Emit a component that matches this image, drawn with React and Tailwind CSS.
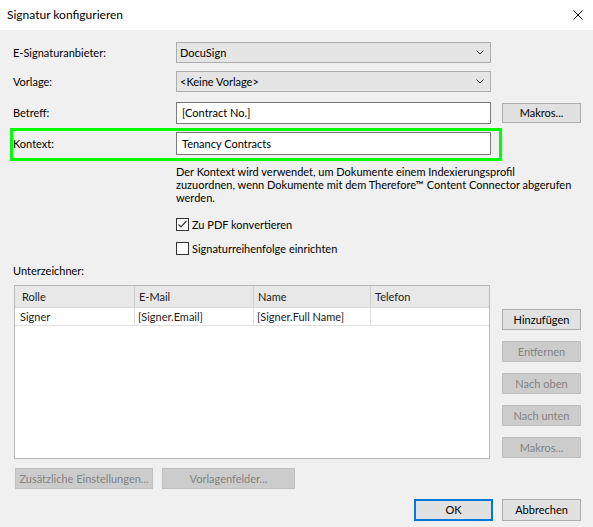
import React from "react";

const Button = ({ children, disabled, primary, className = "" }) => {
  let look = "bg-[#e1e1e1] border border-[#adadad] text-black";
  if (disabled) look = "bg-[#cccccc] border border-[#bfbfbf] text-[#838383]";
  if (primary) look = "bg-[#e1e1e1] border-2 border-[#0078d7] text-black";
  return (
    <div className={`flex items-center justify-center whitespace-nowrap shrink-0 ${look} ${className}`}>
      {children}
    </div>
  );
};

const Select = ({ value }) => (
  <div className="flex items-center justify-between w-[315px] h-full bg-[#e5e5e5] border border-[#acacac] pl-[3px] pr-[6px]">
    <span>{value}</span>
    <svg width="8" height="5" viewBox="0 0 8 5">
      <polyline points="0.5,0.5 4,4 7.5,0.5" fill="none" stroke="#333" strokeWidth="1" />
    </svg>
  </div>
);

const TextBox = ({ value }) => (
  <div className="flex items-center w-[315px] h-full bg-white border border-[#7a7a7a] pl-[5px]">
    {value}
  </div>
);

const CheckBox = ({ checked, label }) => (
  <div className="flex items-center h-[13px] pl-[163px] leading-[13px]">
    <div className="w-[13px] h-[13px] bg-white border border-[#333] flex items-center justify-center shrink-0">
      {checked && (
        <svg width="11" height="11" viewBox="0 0 11 11">
          <polyline points="1.5,5.5 4,8 9.5,2" fill="none" stroke="#333" strokeWidth="1.2" />
        </svg>
      )}
    </div>
    <span className="ml-[3px]">{label}</span>
  </div>
);

const columns = [
  { title: "Rolle", value: "Signer", w: "w-[120px]", hp: "pl-[7px]", rp: "pl-[5px]" },
  { title: "E-Mail", value: "[Signer.Email]", w: "w-[119px]", hp: "pl-[4px]", rp: "pl-[3px]" },
  { title: "Name", value: "[Signer.Full Name]", w: "w-[117px]", hp: "pl-[4px]", rp: "pl-[3px]" },
  { title: "Telefon", value: "", w: "w-[119px]", hp: "pl-[4px]", rp: "pl-[3px]" },
];

const SignerTable = () => (
  <div className="w-[476px] h-[174px] bg-white border border-[#b9b9b9] ml-[1px] overflow-hidden text-[#222] shrink-0">
    <div className="flex h-[22px] bg-[#e8e8e8] border-b border-[#d5d5d5]">
      {columns.map((c, i) => (
        <div
          key={c.title}
          className={`${c.w} ${c.hp} flex items-center shrink-0 ${i < 3 ? "border-r border-[#d0d0d0]" : ""}`}
        >
          {c.title}
        </div>
      ))}
    </div>
    <div className="flex h-[18px] border-b border-[#e0e0e0]">
      {columns.map((c, i) => (
        <div
          key={c.title}
          className={`${c.w} ${c.rp} flex items-center shrink-0 ${i < 3 ? "border-r border-[#e0e0e0]" : ""}`}
        >
          {c.value}
        </div>
      ))}
    </div>
  </div>
);

export default function App() {
  return (
    <div className="w-[593px] h-[527px] bg-[#f0f0f0] [font-family:Lato,sans-serif] text-[11px] leading-[14px] text-black overflow-hidden">
      {/* window title */}
      <div className="h-[30px] bg-white flex items-center justify-between pl-[7px] pr-[10px] text-[12px]">
        <span>Signatur konfigurieren</span>
        <svg width="10" height="10" viewBox="0 0 10 10">
          <path d="M0.5 0.5 L9.5 9.5 M9.5 0.5 L0.5 9.5" stroke="#000" strokeWidth="1" />
        </svg>
      </div>

      <div className="pl-[13px] pt-[12px]">
        <div className="flex items-center h-[21px]">
          <span className="w-[163px] shrink-0">E-Signaturanbieter:</span>
          <Select value="DocuSign" />
        </div>
        <div className="flex items-center h-[21px] mt-[8px]">
          <span className="w-[163px] shrink-0">Vorlage:</span>
          <Select value="<Keine Vorlage>" />
        </div>
        <div className="flex items-center h-[22px] mt-[10px]">
          <span className="w-[163px] shrink-0">Betreff:</span>
          <TextBox value="[Contract No.]" />
          <Button className="ml-[11px] w-[79px] h-[20px]">Makros...</Button>
        </div>

        {/* highlighted context row */}
        <div className="flex items-start w-[492px] h-[33px] mt-[4px] -ml-[3px] border-[3px] border-[#00ff00] pt-[1px]">
          <span className="w-[163px] shrink-0 leading-[23px]">Kontext:</span>
          <div className="h-[23px]">
            <TextBox value="Tenancy Contracts" />
          </div>
        </div>

        <p className="mt-[4px] pl-[163px] leading-[13px] whitespace-nowrap">
          Der Kontext wird verwendet, um Dokumente einem Indexierungsprofil
          <br />
          zuzuordnen, wenn Dokumente mit dem Therefore™ Content Connector abgerufen
          <br />
          werden.
        </p>

        <div className="mt-[14px]">
          <CheckBox checked label="Zu PDF konvertieren" />
        </div>
        <div className="mt-[11px]">
          <CheckBox label="Signaturreihenfolge einrichten" />
        </div>

        <div className="mt-[9px] h-[14px]">Unterzeichner:</div>

        <div className="flex mt-[7px]">
          <SignerTable />
          <div className="flex flex-col gap-[11px] ml-[12px] pt-[24px]">
            <Button className="w-[79px] h-[21px]">Hinzufügen</Button>
            <Button disabled className="w-[79px] h-[21px]">Entfernen</Button>
            <Button disabled className="w-[79px] h-[21px]">Nach oben</Button>
            <Button disabled className="w-[79px] h-[21px]">Nach unten</Button>
            <Button disabled className="w-[79px] h-[21px]">Makros...</Button>
          </div>
        </div>

        <div className="flex mt-[9px] ml-[2px] gap-[9px]">
          <Button disabled className="w-[138px] h-[21px]">Zusätzliche Einstellungen...</Button>
          <Button disabled className="w-[133px] h-[21px]">Vorlagenfelder...</Button>
        </div>

        <div className="flex justify-end gap-[9px] mt-[10px] pr-[12px]">
          <Button primary className="w-[79px] h-[22px]">OK</Button>
          <Button className="w-[79px] h-[22px]">Abbrechen</Button>
        </div>
      </div>
    </div>
  );
}
